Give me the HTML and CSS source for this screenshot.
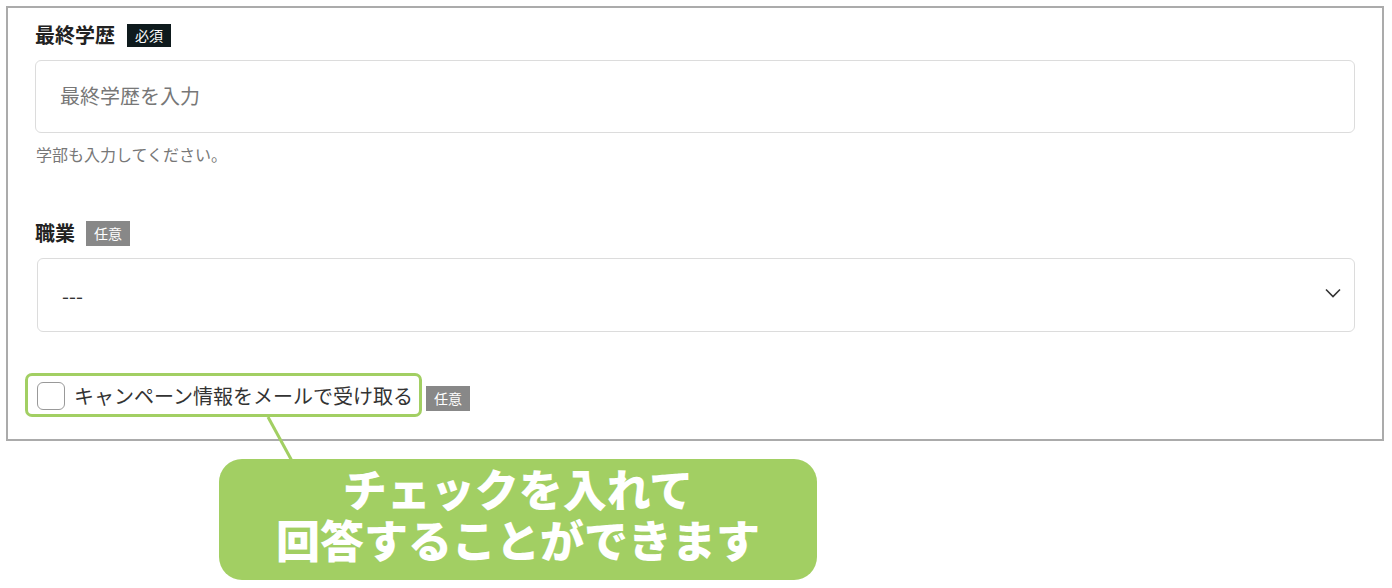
FILE: index.html
```html
<!DOCTYPE html>
<html lang="ja">
<head>
<meta charset="utf-8">
<title>Form</title>
<link rel="stylesheet" href="styles.css">
</head>
<body>
<div class="frame">
  <div class="label-row">
    <span class="label">最終学歴</span>
    <span class="badge badge-required">必須</span>
  </div>
  <div class="input">最終学歴を入力</div>
  <p class="help">学部も入力してください。</p>

  <div class="label-row label-row-2">
    <span class="label">職業</span>
    <span class="badge badge-optional">任意</span>
  </div>
  <div class="select">
    <span class="select-value">---</span>
    <svg class="chevron" width="16" height="10" viewBox="0 0 16 10"><path d="M1 1.5 L8 8.5 L15 1.5" fill="none" stroke="#333" stroke-width="1.6"/></svg>
  </div>

  <div class="check-row">
    <label class="highlight">
      <span class="checkbox"></span>
      <span class="check-text">キャンペーン情報をメールで受け取る</span>
    </label>
    <span class="badge badge-optional badge-check">任意</span>
  </div>
</div>

<svg class="connector" width="40" height="50" viewBox="0 0 40 50"><line x1="8" y1="2" x2="32" y2="46" stroke="#a2cf63" stroke-width="3"/></svg>

<div class="bubble"><div class="bubble-line">チェックを入れて</div><div class="bubble-line">回答することができます</div></div>
</body>
</html>
```
FILE: styles.css
```css
html, body {
  margin: 0;
  padding: 0;
  background: #fff;
}
body {
  font-family: "Noto Sans CJK JP", "Noto Sans", sans-serif;
  color: #222;
  position: relative;
  width: 1392px;
  height: 588px;
  overflow: hidden;
}
.frame {
  box-sizing: border-box;
  width: 1378px;
  margin: 6px 0 0 6px;
  border: 2px solid #ababab;
  padding: 16px 27px 22px 27px;
}
.label-row {
  display: flex;
  align-items: center;
  height: 23px;
  gap: 12px;
}
.label-row-2 {
  margin-top: 55px;
  height: 25px;
  gap: 11px;
}
.label {
  font-size: 20px;
  font-weight: 700;
  line-height: 20px;
  color: #222;
  margin-top: -2px;
}
.badge {
  display: inline-block;
  box-sizing: border-box;
  height: 23px;
  line-height: 23px;
  padding: 0 8px;
  font-size: 14px;
  color: #fff;
}
.badge-required {
  background: #0e1a1d;
}
.badge-optional {
  background: #888;
  height: 25px;
  line-height: 25px;
}
.input {
  box-sizing: border-box;
  margin-top: 13px;
  height: 73px;
  border: 1px solid #dcdcdc;
  border-radius: 6px;
  padding: 0 0 2px 24px;
  display: flex;
  align-items: center;
  font-size: 20px;
  color: #777;
}
.help {
  margin: 9px 0 0 1px;
  font-size: 16px;
  line-height: 24px;
  color: #777;
}
.select {
  box-sizing: border-box;
  margin: 12px 0 0 2px;
  height: 74px;
  border: 1px solid #dcdcdc;
  border-radius: 6px;
  padding: 0 13px 0 24px;
  display: flex;
  align-items: center;
  justify-content: space-between;
}
.select-value {
  font-size: 20px;
  color: #333;
}
.chevron {
  display: block;
  margin-top: -5px;
}
.check-row {
  margin-top: 41px;
  display: flex;
  align-items: center;
  gap: 4px;
}
.highlight {
  box-sizing: border-box;
  display: flex;
  align-items: center;
  gap: 9px;
  margin-left: -10px;
  height: 44px;
  border: 3px solid #a2cf63;
  border-radius: 7px;
  padding: 2px 6px 0 9px;
}
.checkbox {
  box-sizing: border-box;
  width: 28px;
  height: 28px;
  border: 1px solid #999;
  border-radius: 6px;
  background: #fff;
}
.check-text {
  font-size: 20px;
  color: #333;
  line-height: 28px;
}
.badge-check {
  margin-top: 6px;
}
.connector {
  position: absolute;
  left: 260px;
  top: 415px;
}
.bubble {
  box-sizing: border-box;
  margin: 18px 0 0 219px;
  width: 598px;
  height: 121px;
  background: #a2cf63;
  border-radius: 23px;
  padding-top: 4px;
  text-align: center;
  color: #fff;
  font-size: 44px;
  font-weight: 900;
  position: relative;
}
.bubble-line {
  height: 51px;
  line-height: 51px;
}
```
